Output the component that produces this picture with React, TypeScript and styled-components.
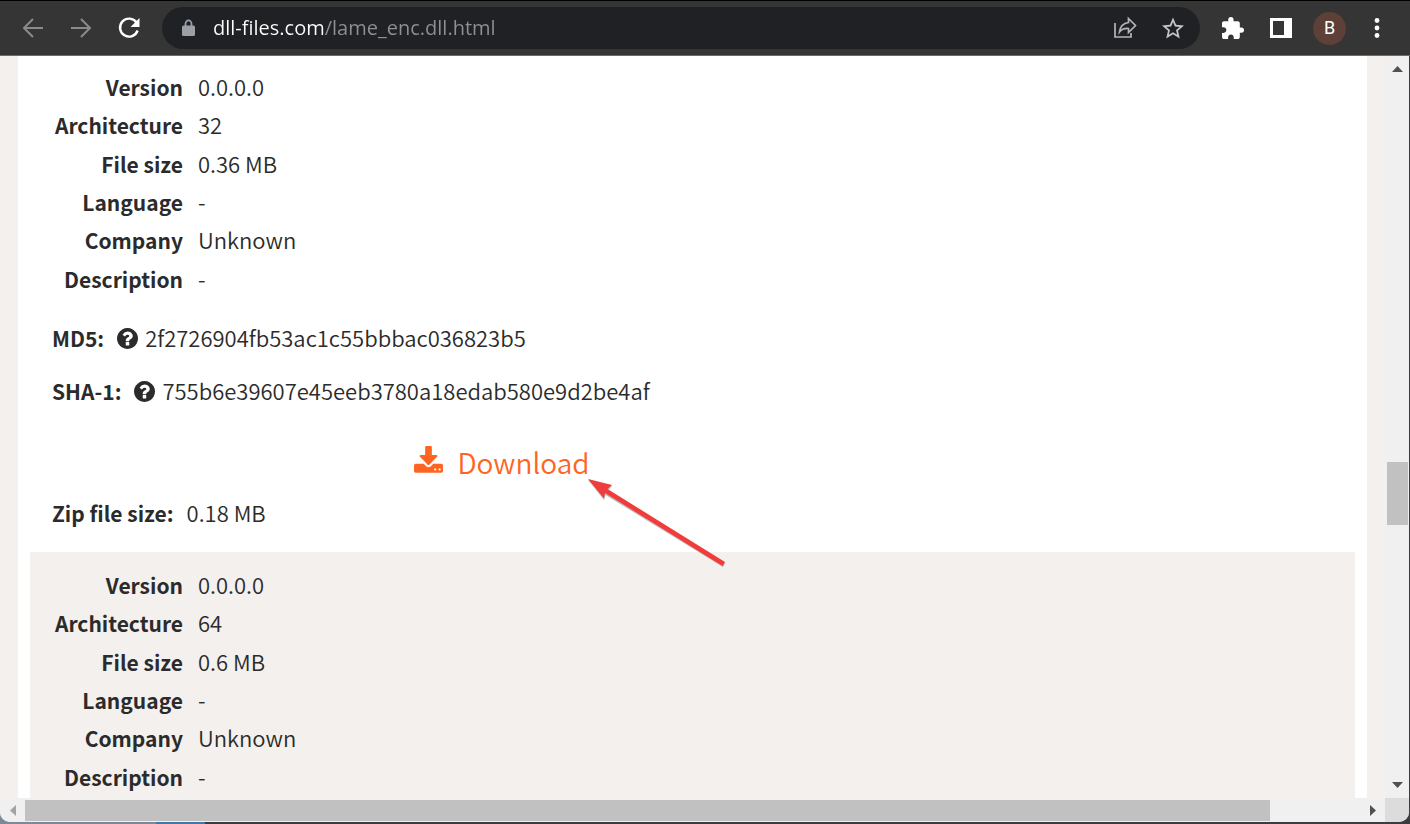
import React from "react";
import styled, { createGlobalStyle } from "styled-components";

const GlobalStyle = createGlobalStyle`
  * { box-sizing: border-box; }
  body { margin: 0; background: #3c3c3e; }
  button { padding: 0; border: 0; background: none; cursor: pointer; }
`;

const Window = styled.div`
  position: relative;
  display: flex;
  flex-direction: column;
  height: 100vh;
  overflow: hidden;
  padding-bottom: 2px;
  background: linear-gradient(90deg, #7d8a96 0 156px, #3f77a8 156px 205px, #3c3c3e 205px);
  font-family: "Noto Sans CJK JP", "Noto Sans", sans-serif;
  color: #2b2b2b;
`;

const Toolbar = styled.header`
  flex: none;
  display: flex;
  align-items: center;
  height: 56px;
  padding: 0 19px;
  background: #353535;
  border-top: 1px solid #000;
  border-bottom: 1px solid #6b6b6b;
`;

const NavGroup = styled.nav`
  display: flex;
  gap: 20px;
  margin-right: 19px;
`;

const ActionGroup = styled.div`
  display: flex;
  align-items: center;
  gap: 20px;
  margin-left: 19px;
`;

const IconButton = styled.button<{ $tone?: string }>`
  display: flex;
  align-items: center;
  justify-content: center;
  width: 28px;
  height: 28px;
  color: ${(p) => p.$tone ?? "#fff"};
`;

const Avatar = styled.button`
  width: 33px;
  height: 33px;
  margin: 0 -3px 0 -2px;
  border-radius: 50%;
  background: #5d4037;
  color: #fff;
  font: 18px/32px Roboto, sans-serif;
`;

const AddressBar = styled.div`
  flex: 1;
  display: flex;
  align-items: center;
  gap: 20px;
  height: 42px;
  padding: 0 13px 0 20px;
  border-radius: 21px;
  background: #202124;
`;

const AddressLabel = styled.label`
  flex: 1;
  display: flex;
  align-items: center;
  gap: 18px;
`;

const AddressInput = styled.input`
  flex: 1;
  min-width: 0;
  height: 34px;
  padding: 0;
  border: 0;
  outline: 0;
  font: 20px/34px "Open Sans", sans-serif;
  color: #8f9092;
  background: linear-gradient(90deg, #fff 111px, #8f9092 111px);
  -webkit-background-clip: text;
  background-clip: text;
  -webkit-text-fill-color: transparent;
`;

const Viewport = styled.div`
  flex: 1;
  min-height: 0;
  display: grid;
  grid-template-columns: 1fr 24px;
  grid-template-rows: minmax(0, 1fr) 24px;
  margin-right: 1px;
  background: #f0f0f0;
  border-radius: 0 0 10px 10px;
  overflow: hidden;
`;

const Page = styled.main`
  overflow: hidden;
  padding: 0 18px;
  background: #f4f0ed;
`;

const Sheet = styled.div`
  padding: 0 12px;
  background: #fff;
`;

const FileCard = styled.article<{ $shaded?: boolean }>`
  padding: ${(p) => (p.$shaded ? "14px 22px" : "12px 22px 5px")};
  background: ${(p) => (p.$shaded ? "#f4f0ed" : "#fff")};
  font-size: 21px;
`;

const Details = styled.table`
  height: 230px;
  border-collapse: collapse;
  margin-bottom: 21px;
`;

const Name = styled.th`
  min-width: 146px;
  padding: 0 15px 0 0;
  text-align: right;
  font-weight: 700;
  line-height: 38px;
`;

const Value = styled.td`
  padding: 0 0 2px;
  font-size: 22px;
  font-weight: 350;
  line-height: 36px;
`;

const Hash = styled.p`
  display: flex;
  align-items: center;
  height: 38px;
  margin: 0 0 15px;
  line-height: 38px;
  white-space: pre;
`;

const HashValue = styled.span`
  padding-bottom: 2px;
  font-size: 22px;
  font-weight: 350;
  line-height: 36px;
`;

const Strong = styled.strong`
  font-weight: 700;
  margin-right: 13px;
`;

const HelpButton = styled.button`
  display: flex;
  margin-right: 7px;
  color: #2b2b2b;
`;

const DownloadRow = styled.div`
  display: flex;
  justify-content: center;
  max-width: 900px;
  margin: 32px 0 12px;
`;

const DownloadLink = styled.a`
  display: flex;
  align-items: center;
  gap: 14px;
  height: 40px;
  color: #ff6522;
  font-size: 28px;
  font-weight: 350;
  line-height: 40px;
  text-decoration: none;
`;

const VerticalBar = styled.div`
  display: grid;
  grid-template-rows: 26px 380fr 63fr 247fr 26px;
  padding: 0 1px 0 2px;
  background: #f0f0f0;
`;

const HorizontalBar = styled.div`
  display: grid;
  grid-template-columns: 25px 1245fr 91fr 24px;
  padding: 2px 0 1px;
  background: #f0f0f0;
`;

const Thumb = styled.div`
  background: #c1c1c1;
`;

const BarButton = styled.button<{ $tone?: string }>`
  display: flex;
  align-items: center;
  justify-content: center;
  color: ${(p) => p.$tone ?? "#505050"};
`;

const Corner = styled.div`
  background: #dcdcdc;
`;

const Pointer = styled.svg`
  position: absolute;
  left: 580px;
  top: 470px;
  pointer-events: none;
`;

const stroke = { fill: "none", stroke: "currentColor", strokeWidth: 2 } as const;

const HelpIcon = () => (
  <svg width="21" height="21" viewBox="128 128 1536 1536" fill="currentColor" aria-hidden="true">
    <path d="M1024 1376v-192q0-14-9-23t-23-9h-192q-14 0-23 9t-9 23v192q0 14 9 23t23 9h192q14 0 23-9t9-23zm256-672q0-88-55.5-163t-138.5-116-170-41q-243 0-371 213-15 24 8 42l132 100q7 6 19 6 16 0 25-12 53-68 86-92 34-24 86-24 48 0 85.500 26t37.500 59q0 38-20 61t-68 45q-63 28-115.500 86.500t-52.500 125.500v36q0 14 9 23t23 9h192q14 0 23-9t9-23q0-19 21.500-49.500t54.500-49.500q32-18 49-28.500t46-35 44.500-48 28-60.500 12.500-81zm384 192q0 209-103 385.500t-279.500 279.500-385.500 103-385.500-103-279.500-279.500-103-385.500 103-385.500 279.500-279.500 385.500-103 385.500 103 279.500 279.500 103 385.500z" />
  </svg>
);

const DownloadIcon = () => (
  <svg width="29" height="32" viewBox="64 0 1664 1836" fill="currentColor" aria-hidden="true">
    <path d="M1344 1344q0-26-19-45t-45-19-45 19-19 45 19 45 45 19 45-19 19-45zm256 0q0-26-19-45t-45-19-45 19-19 45 19 45 45 19 45-19 19-45zm128-224v320q0 40-28 68t-68 28h-1472q-40 0-68-28t-28-68v-320q0-40 28-68t68-28h465l135 136q58 56 136 56t136-56l136-136h464q40 0 68 28t28 68zm-325-569q17 41-14 70l-448 448q-18 19-45 19t-45-19l-448-448q-31-29-14-70 17-39 59-39h256v-448q0-26 19-45t45-19h256q26 0 45 19t19 45v448h256q42 0 59 39z" />
  </svg>
);

const Arrow = ({ d, w, h }: { d: string; w: number; h: number }) => (
  <svg width={w} height={h} fill="currentColor" aria-hidden="true">
    <path d={d} />
  </svg>
);

const DetailTable = ({ rows }: { rows: [string, string][] }) => (
  <Details>
    <tbody>
      {rows.map(([name, value]) => (
        <tr key={name}>
          <Name scope="row">{name}</Name>
          <Value>{value}</Value>
        </tr>
      ))}
    </tbody>
  </Details>
);

const HashLine = ({ name, value }: { name: string; value: string }) => (
  <Hash>
    <Strong>{name}:</Strong>
    <HelpButton aria-label={`About ${name}`}>
      <HelpIcon />
    </HelpButton>
    <HashValue>{value}</HashValue>
  </Hash>
);

const details = (arch: string, size: string): [string, string][] => [
  ["Version", "0.0.0.0"],
  ["Architecture", arch],
  ["File size", size],
  ["Language", "-"],
  ["Company", "Unknown"],
  ["Description", "-"],
];

export default function App() {
  return (
    <Window>
      <GlobalStyle />
      <Toolbar>
        <NavGroup aria-label="History">
          <IconButton aria-label="Back" $tone="#8b8b8b">
            <svg width="22" height="22" {...stroke}>
              <path d="M21 11H2M11 2L2 11l9 9" />
            </svg>
          </IconButton>
          <IconButton aria-label="Forward" $tone="#8b8b8b">
            <svg width="22" height="22" {...stroke}>
              <path d="M1 11h19M11 2l9 9-9 9" />
            </svg>
          </IconButton>
          <IconButton aria-label="Reload">
            <svg width="22" height="22" fill="none" stroke="currentColor" strokeWidth="2.400">
              <path d="M18.500 5.500A9 9 0 1 0 19.600 13.500" />
              <path d="M21.500 1v9h-9z" fill="currentColor" stroke="none" />
            </svg>
          </IconButton>
        </NavGroup>
        <AddressBar>
          <AddressLabel>
            <svg width="13" height="18" aria-hidden="true">
              <path d="M3.500 8V5a3 3.600 0 0 1 6 0v3" fill="none" stroke="#9aa0a6" strokeWidth="1.800" />
              <rect y="6.500" width="13" height="10.500" rx="1.500" fill="#9aa0a6" />
            </svg>
            <AddressInput aria-label="Address" defaultValue="dll-files.com/lame_enc.dll.html" />
          </AddressLabel>
          <IconButton aria-label="Share" $tone="#b4b5b7">
            <svg width="24" height="24" fill="none" stroke="currentColor" strokeWidth="1.700">
              <path d="M2 7v14h16v-4" />
              <path d="M15.500 2.500l7 7-7 7v-4q-6-.5-9 3.500 1-8.500 9-9.500z" strokeLinejoin="miter" />
            </svg>
          </IconButton>
          <IconButton aria-label="Bookmark" $tone="#c4c5c7">
            <svg width="22" height="22" viewBox="2 2 20 19" fill="currentColor">
              <path d="M22 9.240l-7.190-.62L12 2 9.190 8.630 2 9.240l5.460 4.730L5.820 21 12 17.270 18.180 21l-1.630-7.030L22 9.240zM12 15.400l-3.760 2.270 1-4.280-3.320-2.880 4.380-.38L12 6.100l1.710 4.040 4.380.38-3.320 2.880 1 4.280L12 15.400z" />
            </svg>
          </IconButton>
        </AddressBar>
        <ActionGroup>
          <IconButton aria-label="Extensions">
            <svg width="22" height="22" viewBox="2 1 21 21" fill="currentColor">
              <path d="M20.500 11H19V7c0-1.100-.9-2-2-2h-4V3.500a2.500 2.500 0 0 0-5 0V5H4c-1.100 0-2 .9-2 2v3.800h1.500c1.500 0 2.700 1.200 2.700 2.700S5 16.200 3.500 16.200H2V20c0 1.100.9 2 2 2h3.800v-1.500c0-1.500 1.200-2.700 2.700-2.700s2.700 1.200 2.700 2.700V22H17c1.100 0 2-.9 2-2v-4h1.500a2.500 2.500 0 0 0 0-5z" />
            </svg>
          </IconButton>
          <IconButton aria-label="Side panel">
            <svg width="22" height="22">
              <path d="M0 1h22v20H0zM3 4v14h11V4z" fill="currentColor" fillRule="evenodd" />
            </svg>
          </IconButton>
          <Avatar aria-label="Profile B">B</Avatar>
          <IconButton aria-label="Menu">
            <svg width="6" height="22" fill="currentColor">
              <circle cx="3" cy="3.500" r="2.400" />
              <circle cx="3" cy="11" r="2.400" />
              <circle cx="3" cy="18.500" r="2.400" />
            </svg>
          </IconButton>
        </ActionGroup>
      </Toolbar>

      <Viewport>
        <Page>
          <Sheet>
            <FileCard>
              <DetailTable rows={details("32", "0.36 MB")} />
              <HashLine name="MD5" value="2f2726904fb53ac1c55bbbac036823b5" />
              <HashLine name="SHA-1" value="755b6e39607e45eeb3780a18edab580e9d2be4af" />
              <DownloadRow>
                <DownloadLink href="#download">
                  <DownloadIcon />
                  Download
                </DownloadLink>
              </DownloadRow>
              <Hash>
                <Strong>Zip file size:</Strong>
                <HashValue>0.18 MB</HashValue>
              </Hash>
            </FileCard>
            <FileCard $shaded>
              <DetailTable rows={details("64", "0.6 MB")} />
            </FileCard>
          </Sheet>
        </Page>
        <VerticalBar>
          <BarButton aria-label="Scroll up">
            <Arrow w={11} h={6} d="M0 6L5.500 0 11 6z" />
          </BarButton>
          <span />
          <Thumb />
          <span />
          <BarButton aria-label="Scroll down">
            <Arrow w={11} h={6} d="M0 0h11L5.500 6z" />
          </BarButton>
        </VerticalBar>
        <HorizontalBar>
          <BarButton aria-label="Scroll left" $tone="#a3a3a3">
            <Arrow w={6} h={11} d="M6 0v11L0 5.500z" />
          </BarButton>
          <Thumb />
          <span />
          <BarButton aria-label="Scroll right">
            <Arrow w={6} h={11} d="M0 0v11l6-5.500z" />
          </BarButton>
        </HorizontalBar>
        <Corner />
      </Viewport>

      <Pointer width="150" height="100" aria-hidden="true">
        <path d="M8 9L32 14.500 28 20 145 92 143 96 25.500 24 24 29z" fill="#777" opacity=".5" transform="translate(0 1)" />
        <path d="M8 9L32 15 27.500 19 145 92 142.500 96 25 23 24 28.500z" fill="#f03c3a" />
      </Pointer>
    </Window>
  );
}
